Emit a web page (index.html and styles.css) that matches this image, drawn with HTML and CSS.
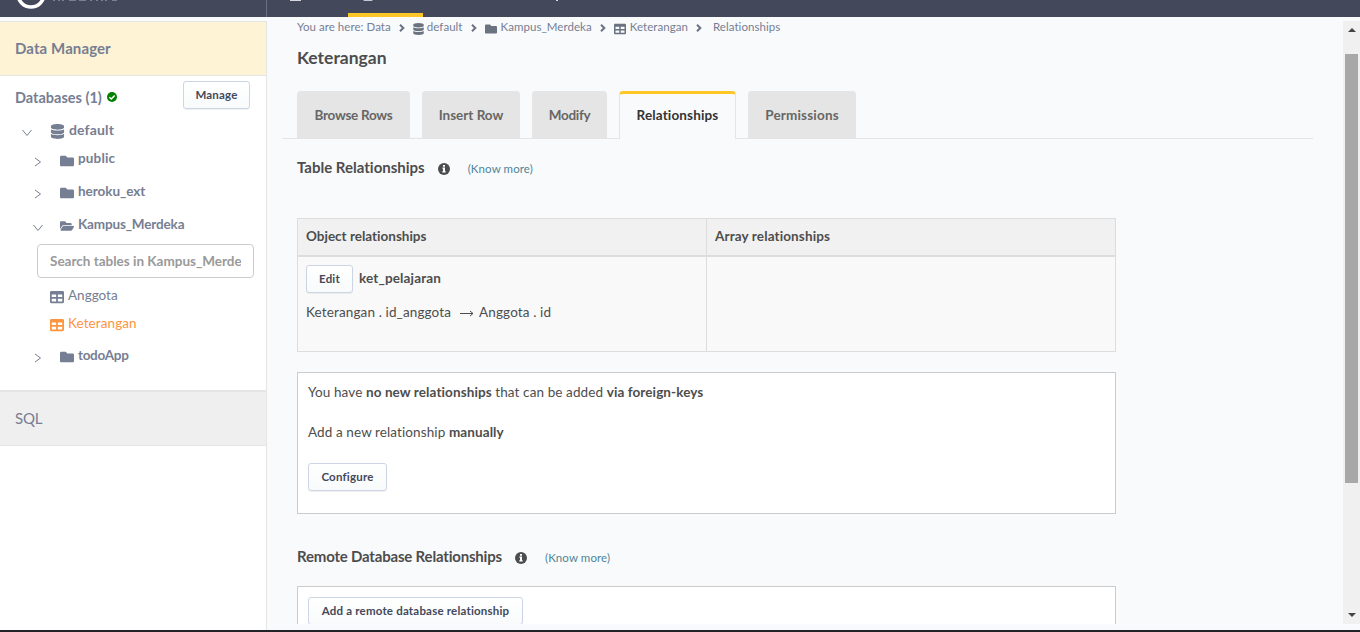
FILE: index.html
```html
<!DOCTYPE html>
<html lang="en">
<head>
<meta charset="utf-8">
<title>Keterangan - Relationships</title>
<link rel="stylesheet" href="styles.css">
</head>
<body>
<svg class="sprite" aria-hidden="true">
  <symbol id="db" viewBox="0 0 448 512"><path fill="currentColor" d="M448 73.143v45.714C448 159.143 347.667 192 224 192S0 159.143 0 118.857V73.143C0 32.857 100.333 0 224 0s224 32.857 224 73.143zM448 176v102.857C448 319.143 347.667 352 224 352S0 319.143 0 278.857V176c48.125 33.143 136.208 48.572 224 48.572S399.874 209.143 448 176zm0 160v102.857C448 479.143 347.667 512 224 512S0 479.143 0 438.857V336c48.125 33.143 136.208 48.572 224 48.572S399.874 369.143 448 336z"/></symbol>
  <symbol id="folder" viewBox="0 0 512 512"><path fill="currentColor" d="M464 128H272l-64-64H48C21.490 64 0 85.490 0 112v288c0 26.510 21.490 48 48 48h416c26.510 0 48-21.490 48-48V176c0-26.510-21.490-48-48-48z"/></symbol>
  <symbol id="folder-open" viewBox="0 0 576 512"><path fill="currentColor" d="M572.694 292.093L500.270 416.248A63.997 63.997 0 0 1 444.989 448H45.025c-18.523 0-30.064-20.093-20.731-36.093l72.424-124.155A64 64 0 0 1 152 256h399.964c18.523 0 30.064 20.093 20.730 36.093zM152 224h328v-48c0-26.510-21.490-48-48-48H272l-64-64H48C21.490 64 0 85.490 0 112v278.046l69.077-118.418C86.214 242.250 117.989 224 152 224z"/></symbol>
  <symbol id="table" viewBox="0 0 512 512"><path fill="currentColor" d="M464 32H48C21.490 32 0 53.490 0 80v352c0 26.510 21.490 48 48 48h416c26.510 0 48-21.490 48-48V80c0-26.510-21.490-48-48-48zM224 416H64v-96h160v96zm0-160H64v-96h160v96zm224 160H288v-96h160v96zm0-160H288v-96h160v96z"/></symbol>
  <symbol id="crumb" viewBox="0 0 6 8"><path fill="none" stroke="currentColor" stroke-width="2" d="M1 .8 4.300 4 1 7.200"/></symbol>
  <symbol id="right" viewBox="0 0 8 10"><path fill="none" stroke="currentColor" d="M1 1 6.500 5 1 9"/></symbol>
  <symbol id="down" viewBox="0 0 10 8"><path fill="none" stroke="currentColor" d="M.5 1 5 6.500 9.500 1"/></symbol>
  <symbol id="info" viewBox="0 0 12 12"><circle cx="6" cy="6" r="6" fill="currentColor"/><path fill="#fff" d="M5 2h2v1.700H5zM4.400 4.600H7v3.700h.7v1.200H4.300V8.300H5V5.700h-.6z"/></symbol>
</svg>
<div class="app">
  <header class="topbar">
    <div class="brand">
      <svg class="logo" width="32" height="12" viewBox="0 0 32 12"><circle cx="16" cy="-6" r="13" fill="none" stroke="#fff" stroke-width="3.600"/></svg>
      <svg class="wordmark" width="64" height="2" viewBox="0 0 64 2"><path stroke="#7c808b" d="M0 .5h64" stroke-dasharray="2 3 2 2 2 5 7 3 7 4 2 4"/></svg>
    </div>
    <nav class="topnav">
      <span class="nav-item nav-api"></span>
      <span class="nav-item nav-data"></span>
      <span class="nav-item nav-tail"></span>
    </nav>
  </header>
  <div class="body">
    <aside class="sidebar">
      <div class="side-title"><span class="t-dm">Data Manager</span></div>
      <div class="dbs">
        <span class="t-dbs">Databases (1)</span>
        <svg class="check" width="10" height="10" viewBox="0 0 10 10"><circle cx="5" cy="5" r="5" fill="#008000"/><path d="M2.400 5.200 4.300 7 7.700 3.400" stroke="#fff" stroke-width="1.500" fill="none"/></svg>
        <button class="btn manage"><span class="t-manage">Manage</span></button>
      </div>
      <div class="tree">
        <div class="node source"><svg class="arrow wide"><use href="#down"/></svg><svg class="ic-db"><use href="#db"/></svg><span class="t-def">default</span></div>
        <div class="node schema public"><svg class="arrow"><use href="#right"/></svg><svg class="ic-folder"><use href="#folder"/></svg><span class="t-pub">public</span></div>
        <div class="node schema"><svg class="arrow"><use href="#right"/></svg><svg class="ic-folder"><use href="#folder"/></svg><span class="t-her">heroku_ext</span></div>
        <div class="node schema"><svg class="arrow wide"><use href="#down"/></svg><svg class="ic-folder"><use href="#folder-open"/></svg><span class="t-kam">Kampus_Merdeka</span></div>
        <div class="search"><span class="t-search">Search tables in Kampus_Merdeka</span></div>
        <div class="node leaf"><svg class="ic-table"><use href="#table"/></svg><span class="t-ang">Anggota</span></div>
        <div class="node leaf active"><svg class="ic-table"><use href="#table"/></svg><span class="t-ket">Keterangan</span></div>
        <div class="node schema todo"><svg class="arrow"><use href="#right"/></svg><svg class="ic-folder"><use href="#folder"/></svg><span class="t-todo">todoApp</span></div>
      </div>
      <div class="sql"><span class="t-sql">SQL</span></div>
    </aside>
    <main class="main">
      <div class="crumbs">
        <span class="t-c1">You are here: Data</span><svg class="sep"><use href="#crumb"/></svg>
        <svg class="c-db"><use href="#db"/></svg><span class="t-c2">default</span><svg class="sep"><use href="#crumb"/></svg>
        <svg class="c-ic"><use href="#folder"/></svg><span class="t-c3">Kampus_Merdeka</span><svg class="sep"><use href="#crumb"/></svg>
        <svg class="c-ic"><use href="#table"/></svg><span class="t-c4">Keterangan</span><svg class="sep last"><use href="#crumb"/></svg>
        <span class="t-c5">Relationships</span>
      </div>
      <h2 class="title"><span class="t-title">Keterangan</span></h2>
      <div class="tabs">
        <div class="tab w1"><span class="t-t1">Browse Rows</span></div>
        <div class="tab w2"><span class="t-t2">Insert Row</span></div>
        <div class="tab w3"><span class="t-t3">Modify</span></div>
        <div class="tab w4 on"><span class="t-t4">Relationships</span></div>
        <div class="tab w5"><span class="t-t5">Permissions</span></div>
      </div>
      <div class="section"><h4 class="t-tr">Table Relationships</h4><svg class="info"><use href="#info"/></svg><a class="t-km">(Know more)</a></div>
      <div class="grid">
        <div class="th"><span class="t-or">Object relationships</span></div>
        <div class="th"><span class="t-ar">Array relationships</span></div>
        <div class="td">
          <div class="rel"><button class="btn edit"><span class="t-edit">Edit</span></button><b class="t-kp">ket_pelajaran</b></div>
          <div class="path"><span class="t-p1">Keterangan . id_anggota</span><svg class="to" width="14" height="7" viewBox="0 0 14 7"><path d="M0 3.500h13M10 1l3 2.500L10 6" fill="none" stroke="#4d4d4d"/></svg><span class="t-p2">Anggota . id</span></div>
        </div>
        <div class="td"></div>
      </div>
      <div class="card">
        <p class="t-l1">You have <b>no new relationships</b> that can be added <b>via foreign-keys</b></p>
        <p class="t-l2">Add a new relationship <b>manually</b></p>
        <button class="btn conf"><span class="t-conf">Configure</span></button>
      </div>
      <div class="section remote"><h4 class="t-rr">Remote Database Relationships</h4><svg class="info"><use href="#info"/></svg><a class="t-km">(Know more)</a></div>
      <div class="card bottom"><button class="btn add"><span class="t-add">Add a remote database relationship</span></button></div>
    </main>
    <div class="scroll"><i class="up"></i><i class="thumb"></i><i class="down"></i></div>
  </div>
</div>
</body>
</html>
```
FILE: styles.css
```css
* { box-sizing: border-box; }
body { margin: 0; width: 1360px; height: 632px; overflow: hidden; background: #f9fafc; color: #4d4d4d; font-family: Lato, "Open Sans", sans-serif; font-size: 13.5px; font-variant-ligatures: none; }
h2, h4, p { margin: 0; font-size: inherit; }
span, h4, b, a, p { white-space: nowrap; }
svg { flex: none; }
.sprite { display: none; }
.app { height: 632px; display: flex; flex-direction: column; border-bottom: 2px solid #222326; }
.topbar { height: 17px; flex: none; display: flex; background: #43495a; overflow: hidden; }
.brand { width: 267px; border-right: 1px solid #6b707e; display: flex; padding-left: 15px; }
.wordmark { margin-left: 6px; }
.topnav { display: flex; }
.nav-item { height: 17px; }
.nav-api { width: 81px; background: linear-gradient(#d5d7da, #d5d7da) 23px 0 / 11px 1px no-repeat; }
.nav-data { width: 75px; border-bottom: 4px solid #ffc627; background: radial-gradient(ellipse 5px 1.5px at 20px 0, #c5c8cc 90%, transparent); }
.nav-tail { width: 150px; background: linear-gradient(#d5d7da, #d5d7da) 133px 0 / 2px 1px no-repeat; }
.body { display: flex; flex: 1; min-height: 0; }
.sidebar { width: 267px; flex: none; margin-top: 4px; background: #fff; border-right: 1px solid #e5e5e5; color: #767e93; font-weight: 700; }
.side-title { height: 55px; background: #fef3d5; border: solid #e5e5e5; border-width: 1px 0; display: flex; align-items: center; padding: 0 0 2px 15px; font-size: 15px; }
.t-dm { letter-spacing: .1px; }
.dbs { height: 40px; display: flex; align-items: center; padding: 2px 16px 0 15px; }
.t-dbs { font-size: 14.5px; }
.check { margin-left: 5px; }
.btn { font: inherit; font-size: 11.5px; font-weight: 700; height: 28px; padding: 0 0 1px; color: #43495a; background: linear-gradient(#fff, #f8fafb); border: 1px solid #ccd5e3; border-radius: 3px; box-shadow: 0 1px 1px rgba(0,0,0,.06); display: flex; align-items: center; justify-content: center; letter-spacing: .2px; }
.manage { width: 67px; margin: -4px 0 0 auto; }
.tree { height: 274px; }
.node { display: flex; align-items: center; }
.node span { margin-top: -2px; }
.source { height: 29px; padding-left: 22px; }
.schema { height: 33px; padding-left: 33px; }
.public { height: 28px; margin-bottom: 2px; }
.arrow { width: 8px; height: 10px; margin: 5px 18px 0 1px; }
.arrow.wide { width: 10px; height: 8px; margin: 6px 17px 0 0; }
.source .arrow.wide { margin: 5px 18px 0 0; }
.ic-db { width: 15px; height: 15px; margin: 2px 4px 0 0; }
.ic-folder { width: 14px; height: 14px; margin: 3px 4px 0 0; }
.t-def { font-size: 14px; letter-spacing: .15px; }
.t-pub { letter-spacing: .15px; }
.t-her { letter-spacing: -.05px; }
.t-kam { letter-spacing: -.15px; }
.t-todo { letter-spacing: -.3px; }
.search { margin: 3px 12px 4px 37px; height: 34px; padding: 0 12px; border: 1px solid #ccc; border-radius: 4px; color: #999; line-height: 32px; overflow: hidden; }
.search span { display: block; overflow: hidden; }
.leaf { height: 28px; padding-left: 50px; font-weight: 400; }
.ic-table { width: 14px; height: 14px; margin: 2px 4px 0 0; }
.t-ket { letter-spacing: .1px; }
.active { color: #fd9540; }
.todo { height: 35px; }
.sql { height: 56px; background: #efefef; border-top: 2px solid #e5e5e5; border-bottom: 1px solid #e5e5e5; display: flex; align-items: center; padding: 0 0 2px 15px; font-weight: 400; font-size: 15px; letter-spacing: -.2px; }
.main { flex: 1; min-width: 0; height: 607px; overflow: hidden; padding-left: 30px; }
.crumbs { height: 21px; display: flex; align-items: center; font-size: 11.5px; color: #767e93; letter-spacing: .05px; }
.crumbs span { margin-top: -2px; }
.sep { width: 6px; height: 8px; margin: 1px 8px 0; color: #6b7280; }
.sep.last { margin-right: 11px; }
.c-db { width: 11px; height: 12px; margin: 2px 3px 0 0; color: #6b7280; }
.c-ic { width: 12px; height: 12px; margin: 2px 4px 0 0; color: #6b7280; }
.title { height: 53px; padding-top: 8px; line-height: 24px; font-size: 17.5px; color: #4d4d4d; }
.tabs { margin-left: -15px; padding-left: 15px; width: 1031px; height: 48px; border-bottom: 1px solid #e5e5e5; display: flex; gap: 12px; }
.tab { height: 47px; display: flex; align-items: center; justify-content: center; background: #e5e5e5; border-radius: 4px 4px 0 0; font-weight: 700; color: #666; }
.t-t1, .t-t3 { letter-spacing: -.27px; }
.t-t4 { letter-spacing: .15px; }
.t-t5 { letter-spacing: .18px; }
.w1 { width: 113px; } .w2 { width: 98px; } .w3 { width: 75px; } .w4 { width: 117px; } .w5 { width: 108px; }
.on { height: 48px; background: #f9fafc; color: #333; border: 1px solid #e5e5e5; border-top: 3px solid #ffc627; border-bottom: 0; padding-bottom: 3px; }
.section { height: 79px; display: flex; align-items: flex-start; padding-top: 19px; line-height: 21px; font-size: 15px; }
.section h4 { margin-top: -1px; }
.t-rr { letter-spacing: -.19px; }
.info { width: 12px; height: 12px; margin: 5px 18px 0 13px; }
.section a { color: #4e8598; font-size: 11.5px; line-height: 22px; letter-spacing: .1px; }
.grid { width: 819px; height: 134px; display: grid; grid-template-columns: 409px 408px; grid-template-rows: 38px 94px; border: 1px solid #ddd; background: #f9f9f9; }
.th { background: #f1f1f1; border-bottom: 2px solid #ddd; padding-left: 8px; line-height: 34px; font-weight: 700; }
.t-ar { letter-spacing: .13px; }
.th + .th, .td + .td { border-left: 1px solid #ddd; margin-left: -1px; padding-left: 8px; width: 409px; }
.td { padding: 8px; }
.rel { display: flex; align-items: center; gap: 6px; letter-spacing: .15px; }
.rel b { margin-top: -2px; }
.edit { width: 47px; }
.path { display: flex; align-items: center; height: 40px; letter-spacing: .13px; }
.path span { margin-top: -2px; }
.to { margin: 0 5px 0 9px; }
.card { width: 819px; height: 142px; margin-top: 20px; border: 1px solid #ccc; background: #fff; padding: 10px; }
.card p { height: 40px; line-height: 18px; letter-spacing: .1px; }
.conf { width: 79px; }
.remote { height: 72px; padding-top: 33px; }
.bottom { margin-top: 0; }
.add { width: 215px; }
.scroll { width: 17px; margin-top: 4px; height: 603px; background: #f0f0f0; display: flex; flex-direction: column; align-items: center; }
.scroll i { display: block; }
.up { margin-top: 7px; border: solid transparent; border-width: 0 4px 4px; border-bottom-color: #444; }
.thumb { width: 13px; height: 429px; margin-top: 22px; background: #a8a8a8; }
.scroll .down { margin-top: 130px; border: solid transparent; border-width: 4px 4px 0; border-top-color: #444; }
```
